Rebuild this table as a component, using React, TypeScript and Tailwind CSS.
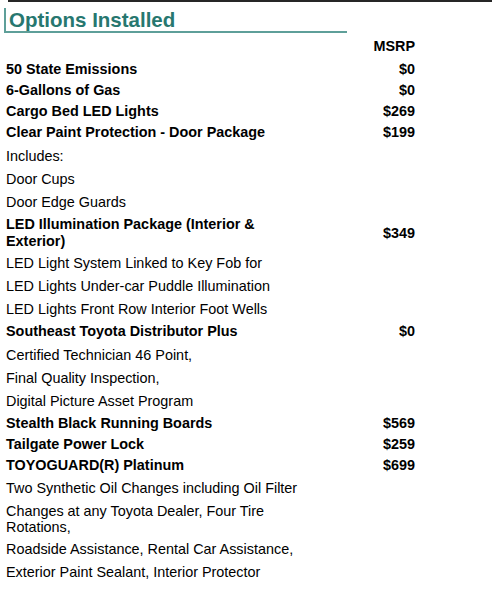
type Item = { name: string; price?: string; bold?: boolean; gap?: string; tight?: boolean };

const rows: Item[] = [
  { name: "50 State Emissions", price: "$0", bold: true },
  { name: "6-Gallons of Gas", price: "$0", bold: true },
  { name: "Cargo Bed LED Lights", price: "$269", bold: true },
  { name: "Clear Paint Protection - Door Package", price: "$199", bold: true },
  { name: "Includes:", gap: "mt-[2px]" },
  { name: "Door Cups" },
  { name: "Door Edge Guards" },
  { name: "LED Illumination Package (Interior & Exterior)", price: "$349", bold: true },
  { name: "LED Light System Linked to Key Fob for" },
  { name: "LED Lights Under-car Puddle Illumination" },
  { name: "LED Lights Front Row Interior Foot Wells" },
  { name: "Southeast Toyota Distributor Plus", price: "$0", bold: true },
  { name: "Certified Technician 46 Point,", gap: "mt-[2px]" },
  { name: "Final Quality Inspection," },
  { name: "Digital Picture Asset Program" },
  { name: "Stealth Black Running Boards", price: "$569", bold: true },
  { name: "Tailgate Power Lock", price: "$259", bold: true },
  { name: "TOYOGUARD(R) Platinum", price: "$699", bold: true },
  { name: "Two Synthetic Oil Changes including Oil Filter", gap: "mt-[1px]" },
  { name: "Changes at any Toyota Dealer, Four Tire Rotations,", tight: true },
  { name: "Roadside Assistance, Rental Car Assistance," },
  { name: "Exterior Paint Sealant, Interior Protector" },
];

export default function App() {
  return (
    <div className="w-[492px] h-[599px] bg-white text-black overflow-hidden font-['Liberation_Sans',Arial,sans-serif]">
      <div className="ml-[8px] h-[2px] bg-[#262626]" />

      <div className="mt-[6px] ml-[4px] w-[343px] border-l-2 border-b-2 border-[#5e9f99] pl-[3px] pt-[1px]">
        <h2 className="text-[20.5px] leading-[22px] font-bold text-[#27776f]">Options Installed</h2>
      </div>

      <div className="mt-[1px] grid grid-cols-[300px_115px] text-[14.4px] leading-[17px]">
        <div className="py-[4px]" />
        <div className="py-[4px] text-right font-bold">MSRP</div>

        {rows.map((r) => (
          <Row key={r.name} r={r} />
        ))}
      </div>
    </div>
  );
}

function Row({ r }: { r: Item }) {
  const pad = r.bold ? "py-[2px]" : r.tight ? "py-[3px] leading-[16px]" : "py-[3px]";
  return (
    <>
      <div className={`pl-[6px] ${pad} ${r.gap ?? ""} ${r.bold ? "font-bold" : ""}`}>{r.name}</div>
      <div className={`${pad} ${r.gap ?? ""} flex items-center justify-end font-bold`}>{r.price}</div>
    </>
  );
}
